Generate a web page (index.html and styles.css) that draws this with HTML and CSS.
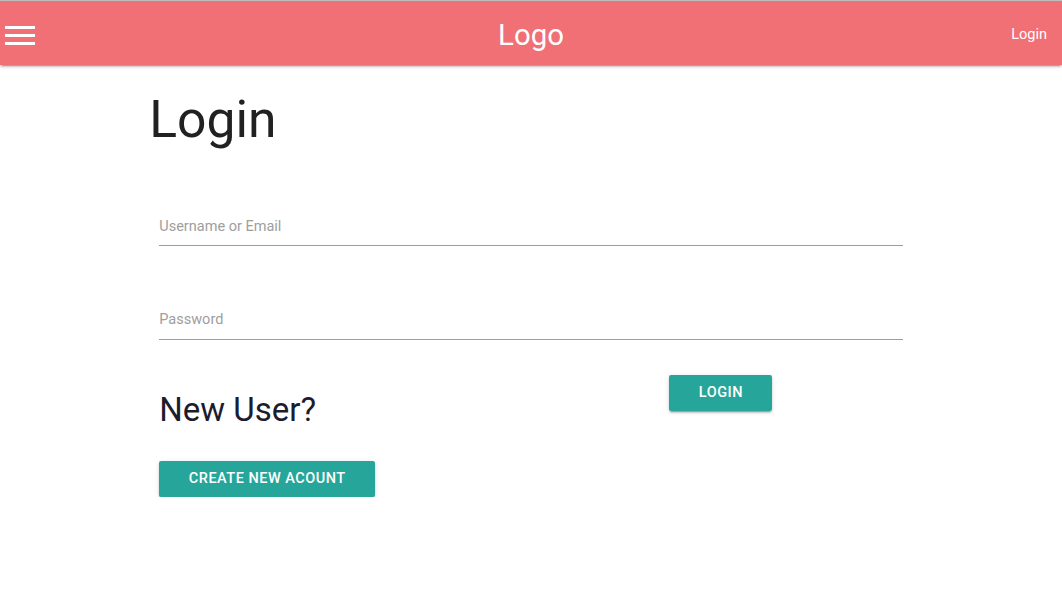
FILE: index.html
```html
<!DOCTYPE html>
<html lang="en">
<head>
<meta charset="utf-8">
<title>Login</title>
<link rel="stylesheet" href="styles.css">
</head>
<body>
<div class="page">
  <nav class="navbar">
    <a class="menu" href="#" aria-label="menu">
      <svg width="30" height="19" viewBox="0 0 30 19"><rect x="0" y="0" width="30" height="3" fill="#fff"/><rect x="0" y="8" width="30" height="3" fill="#fff"/><rect x="0" y="16" width="30" height="3" fill="#fff"/></svg>
    </a>
    <a class="brand" href="#">Logo</a>
    <a class="nav-link" href="#">Login</a>
  </nav>
  <main class="container">
    <h1 class="title">Login</h1>
    <div class="field field-first"><span class="label">Username or Email</span></div>
    <div class="field field-second"><span class="label">Password</span></div>
    <div class="actions">
      <div class="new-user">
        <h2 class="subtitle">New User?</h2>
        <a class="btn btn-create" href="#">Create new acount</a>
      </div>
      <div class="submit">
        <a class="btn" href="#">Login</a>
      </div>
    </div>
  </main>
</div>
</body>
</html>
```

FILE: styles.css
```css
html, body {
  margin: 0;
  padding: 0;
  background: #fff;
}
body {
  font-family: Roboto, "Liberation Sans", sans-serif;
  color: rgba(0, 0, 0, 0.87);
}
a { text-decoration: none; }
.page {
  border-top: 1px solid #c4c4c4;
}
.navbar {
  height: 64px;
  background: #f07075;
  display: grid;
  grid-template-columns: 1fr auto 1fr;
  align-items: center;
  box-shadow: 0 2px 2px 0 rgba(0,0,0,.14), 0 1px 5px 0 rgba(0,0,0,.12), 0 3px 1px -2px rgba(0,0,0,.2);
  position: relative;
}
.menu {
  justify-self: start;
  display: flex;
  margin-left: 5px;
  margin-top: 3px;
}
.brand {
  color: #fff;
  font-size: 29.4px;
  line-height: 64px;
  padding-top: 1px;
}
.nav-link {
  justify-self: end;
  color: #fff;
  font-size: 14.5px;
  line-height: 64px;
  padding: 2px 15px 0;
}
.container {
  width: 70%;
  margin: 0 auto;
}
.title {
  margin: 27px 0 0 -10px;
  font-size: 51.6px;
  line-height: 56.8px;
  font-weight: 400;
  color: #212121;
}
.field {
  border-bottom: 1px solid #9e9e9e;
  padding-bottom: 8px;
}
.field-first { margin-top: 68px; }
.field-second { margin-top: 64px; padding-bottom: 9px; }
.label {
  display: block;
  font-size: 14.5px;
  line-height: 20px;
  color: #9e9e9e;
}
.actions {
  display: grid;
  grid-template-columns: 510px auto;
  align-items: start;
}
.subtitle {
  margin: 52px 0 0;
  font-size: 33px;
  line-height: 36.3px;
  font-weight: 400;
  color: #1c1c2e;
}
.btn {
  display: inline-block;
  height: 36px;
  line-height: 36px;
  padding: 0 29.5px;
  background: #26a69a;
  color: #fff;
  font-size: 14.5px;
  font-weight: 500;
  letter-spacing: .5px;
  text-transform: uppercase;
  border-radius: 2px;
  box-shadow: 0 2px 2px 0 rgba(0,0,0,.14), 0 1px 5px 0 rgba(0,0,0,.12), 0 3px 1px -2px rgba(0,0,0,.2);
}
.btn-create { margin-top: 33px; }
.submit { margin-top: 35px; }
```
